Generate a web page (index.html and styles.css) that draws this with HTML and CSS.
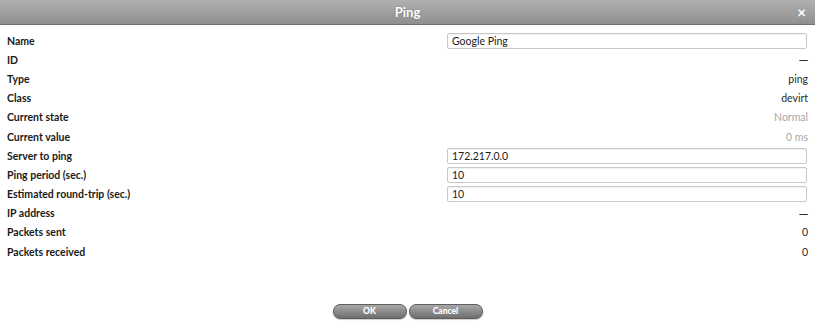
FILE: index.html
```html
<!DOCTYPE html>
<html>
<head>
<meta charset="utf-8">
<link rel="stylesheet" href="styles.css">
</head>
<body>
<div class="dialog">
  <div class="titlebar">
    <span class="title">Ping</span>
    <span class="close">×</span>
  </div>
  <div class="form">
    <div class="row"><span class="label">Name</span><input class="field" type="text" value="Google Ping"></div>
    <div class="row"><span class="label">ID</span><span class="value dash">—</span></div>
    <div class="row"><span class="label">Type</span><span class="value">ping</span></div>
    <div class="row"><span class="label">Class</span><span class="value">devirt</span></div>
    <div class="row"><span class="label">Current state</span><span class="value muted">Normal</span></div>
    <div class="row"><span class="label">Current value</span><span class="value muted">0 ms</span></div>
    <div class="row"><span class="label">Server to ping</span><input class="field" type="text" value="172.217.0.0"></div>
    <div class="row"><span class="label">Ping period (sec.)</span><input class="field" type="text" value="10"></div>
    <div class="row"><span class="label">Estimated round-trip (sec.)</span><input class="field" type="text" value="10"></div>
    <div class="row"><span class="label">IP address</span><span class="value dash">—</span></div>
    <div class="row"><span class="label">Packets sent</span><span class="value">0</span></div>
    <div class="row"><span class="label">Packets received</span><span class="value">0</span></div>
  </div>
  <div class="buttons">
    <button class="btn">OK</button>
    <button class="btn">Cancel</button>
  </div>
</div>
</body>
</html>
```
FILE: styles.css
```css
html, body {
  margin: 0;
  padding: 0;
  background: #ffffff;
}
.dialog {
  width: 815px;
  height: 326px;
  display: flex;
  flex-direction: column;
  font-family: Lato, "Open Sans", sans-serif;
  color: #1a1a1a;
}
.titlebar {
  height: 25px;
  box-sizing: border-box;
  background: linear-gradient(#b0b0b0, #8f8f8f);
  border-bottom: 1px solid #707070;
  display: flex;
  align-items: center;
  justify-content: center;
  position: relative;
}
.title {
  color: #ffffff;
  font-weight: 700;
  font-size: 13px;
  text-shadow: 0 0 2px rgba(0,0,0,0.25);
}
.close {
  position: absolute;
  right: 9px;
  top: 3px;
  color: #ffffff;
  font-weight: 700;
  font-size: 15px;
  line-height: 18px;
}
.form {
  padding: 6px 7px 0 7px;
  display: flex;
  flex-direction: column;
}
.row {
  height: 19.2px;
  display: flex;
  align-items: center;
  justify-content: space-between;
}
.label {
  font-weight: 700;
  font-size: 10.5px;
  color: #1a1a1a;
}
.value {
  font-size: 10.5px;
  color: #2a2a2a;
}
.value.dash {
  font-family: "Open Sans", sans-serif;
  font-size: 9px;
  font-weight: 600;
}
.value.muted {
  color: #a8a8a8;
}
.field {
  width: 360px;
  height: 16px;
  box-sizing: border-box;
  margin: 0 1px 0 0;
  border: 1px solid #c8c8c8;
  border-radius: 2px;
  padding: 0 4px;
  font-family: Lato, "Open Sans", sans-serif;
  font-size: 10.5px;
  color: #1a1a1a;
  background: #fff;
  box-shadow: inset 0 1px 1px rgba(0,0,0,0.06);
}
.buttons {
  margin-top: auto;
  margin-bottom: 7px;
  display: flex;
  justify-content: center;
  gap: 2px;
}
.btn {
  width: 74px;
  height: 15px;
  border: 1px solid #5e5e5e;
  border-radius: 7px;
  background: linear-gradient(#a8a8a8, #6e6e6e);
  color: #ffffff;
  font-family: Lato, "Open Sans", sans-serif;
  font-weight: 900;
  font-size: 8.5px;
  padding: 0;
  line-height: 13px;
  box-shadow: 0 1px 1px rgba(0,0,0,0.2);
}
```
